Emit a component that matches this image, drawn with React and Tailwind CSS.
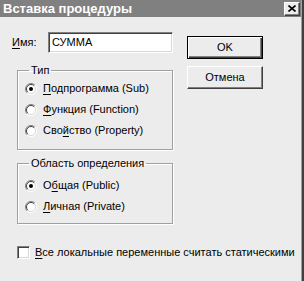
import React from "react";

const font = "font-['Liberation_Sans',Arial,sans-serif]";

function Radio({ checked }) {
  return (
    <svg width="12" height="12" viewBox="0 0 12 12" className="shrink-0">
      <circle cx="6" cy="6" r="5" fill="#ffffff" />
      <path d="M2.1 9.9 A5.5 5.5 0 0 1 9.9 2.1" fill="none" stroke="#808080" strokeWidth="1" />
      <path d="M2.8 9.2 A4.5 4.5 0 0 1 9.2 2.8" fill="none" stroke="#404040" strokeWidth="1" />
      <path d="M9.9 2.1 A5.5 5.5 0 0 1 2.1 9.9" fill="none" stroke="#ffffff" strokeWidth="1" />
      <path d="M9.2 2.8 A4.5 4.5 0 0 1 2.8 9.2" fill="none" stroke="#d8d8d8" strokeWidth="1" />
      {checked && <circle cx="6" cy="6" r="2" fill="#000000" />}
    </svg>
  );
}

function RadioRow({ checked, pre, u, post }) {
  return (
    <div className="flex h-[21px] items-center">
      <Radio checked={checked} />
      <span className="ml-[6px] whitespace-nowrap">
        {pre}
        <span className="underline underline-offset-2">{u}</span>
        {post}
      </span>
    </div>
  );
}

function Group({ title, children, className }) {
  return (
    <fieldset
      className={
        "border border-[#a0a0a0] shadow-[1px_1px_0_#ffffff,inset_1px_1px_0_#ffffff] " +
        className
      }
    >
      <legend className="ml-[4px] px-[2px] leading-[13px]">{title}</legend>
      {children}
    </fieldset>
  );
}

export default function App() {
  return (
    <div className={"flex h-[281px] w-[304px] bg-[#ececec] text-[11px] text-black " + font}>
      <div className="flex w-[301px] flex-col">
        {/* Title bar */}
        <div className="flex h-[17px] items-center justify-between bg-[#808080] pl-[3px] pr-[1px]">
          <span className="text-[13px] font-bold leading-none text-white">Вставка процедуры</span>
          <div className="flex h-[14px] w-[16px] items-center justify-center border border-b-[#404040] border-l-white border-r-[#404040] border-t-white bg-[#ececec] shadow-[inset_-1px_-1px_0_#808080]">
            <svg width="8" height="7" viewBox="0 0 8 7">
              <path d="M0.5 0.5 L7.5 6.5 M7.5 0.5 L0.5 6.5" stroke="#000" strokeWidth="1.6" />
            </svg>
          </div>
        </div>

        {/* Body */}
        <div className="flex pl-[12px] pt-[15px]">
          {/* Left column */}
          <div className="flex w-[161px] flex-col">
            <div className="flex items-center">
              <span className="w-[36px]">
                <span className="underline underline-offset-2">И</span>мя:
              </span>
              <div className="flex h-[21px] w-[125px] items-center border border-b-white border-l-[#808080] border-r-white border-t-[#808080] bg-white pl-[3px] shadow-[inset_1px_1px_0_#404040,inset_-1px_-1px_0_#d8d8d8]">
                СУММА
              </div>
            </div>

            <Group title="Тип" className="ml-[5px] mt-[11px] pb-[8px] pl-[7px]">
              <div className="mt-[1px] flex flex-col">
                <RadioRow checked pre="" u="П" post="одпрограмма (Sub)" />
                <RadioRow pre="" u="Ф" post="ункция (Function)" />
                <RadioRow pre="Сво" u="й" post="ство (Property)" />
              </div>
            </Group>

            <Group title="Область определения" className="ml-[5px] mt-[7px] pb-[6px] pl-[7px]">
              <div className="mt-[5px] flex flex-col">
                <RadioRow checked pre="О" u="б" post="щая (Public)" />
                <RadioRow pre="" u="Л" post="ичная (Private)" />
              </div>
            </Group>

            <div className="ml-[5px] mt-[20px] flex items-center">
              <div className="h-[13px] w-[13px] shrink-0 border border-b-white border-l-[#808080] border-r-white border-t-[#808080] bg-white shadow-[inset_1px_1px_0_#404040,inset_-1px_-1px_0_#d8d8d8]" />
              <span className="ml-[5px] whitespace-nowrap">
                <span className="underline underline-offset-2">В</span>се локальные переменные считать статическими
              </span>
            </div>
          </div>

          {/* Right column */}
          <div className="ml-[14px] mt-[4px] flex flex-col gap-[7px]">
            <div className="flex h-[23px] w-[76px] items-center justify-center border border-black shadow-[inset_1px_1px_0_#ffffff,inset_-1px_-1px_0_#404040,inset_-2px_-2px_0_#808080]">
              OK
            </div>
            <div className="flex h-[23px] w-[76px] items-center justify-center border border-b-[#404040] border-l-white border-r-[#404040] border-t-white shadow-[inset_-1px_-1px_0_#808080]">
              Отмена
            </div>
          </div>
        </div>
      </div>
      <div className="w-[3px] bg-[#404040] shadow-[inset_1px_0_0_#a0a0a0]" />
    </div>
  );
}
